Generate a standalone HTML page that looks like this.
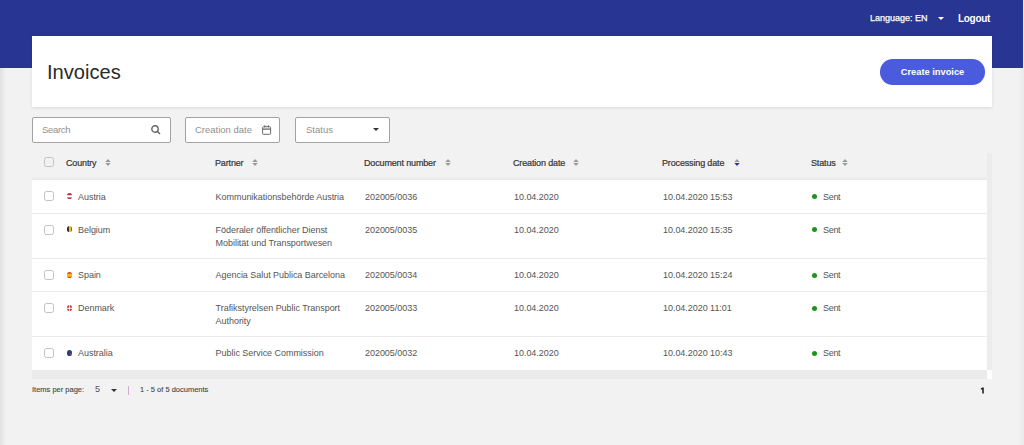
<!DOCTYPE html>
<html><head><meta charset="utf-8">
<style>
*{box-sizing:border-box;margin:0;padding:0}
html,body{width:1024px;height:445px;overflow:hidden}
body{background:#f2f2f2;font-family:"Liberation Sans",sans-serif;position:relative;color:#333}
.hdr{position:absolute;left:0;top:0;width:1023px;height:68px;background:#283593}
.lang{position:absolute;left:870px;top:12px;color:#fff;font-size:9px;line-height:12px;-webkit-text-stroke:0.25px #fff}
.langarr{position:absolute;left:938.3px;top:17px;width:0;height:0;border-left:3.5px solid transparent;border-right:3.5px solid transparent;border-top:3.5px solid #fff}
.logout{position:absolute;left:958px;top:11.7px;color:#fff;font-size:10px;font-weight:bold;line-height:13px;letter-spacing:-0.3px}
.leftshade{position:absolute;left:0;top:68px;width:6px;height:377px;background:linear-gradient(to right,#e0e0e3,#f2f2f2)}
.rightshade{position:absolute;left:1018px;top:68px;width:6px;height:377px;background:linear-gradient(to right,#f2f2f2,#eaeaea)}
.card{position:absolute;left:32px;top:36px;width:960px;height:70.5px;background:#fff;box-shadow:0 1px 3px rgba(0,0,0,.10)}
.title{position:absolute;left:47px;top:60px;font-size:20.1px;color:#2a2a2a;line-height:24px}
.btn{position:absolute;left:880px;top:59.4px;width:105px;height:25.4px;border-radius:12.7px;background:#4a5bdd;color:#fff;font-size:9.3px;font-weight:bold;line-height:26.6px;text-align:center}
.inp{position:absolute;top:117px;height:25.6px;background:#fff;border:1px solid #a2a2a2;border-radius:2px}
.ph{position:absolute;top:0;line-height:23.6px;font-size:9.5px;color:#909090}
.th{position:absolute;top:177px;left:32px;width:955px;height:3px;background:linear-gradient(#efefef,#e9e9e9)}
.scroll{position:absolute;left:987px;top:153px;width:5px;height:226px;background:#ececec}
.hcell{position:absolute;top:157px;font-size:9px;color:#383838;line-height:12px;-webkit-text-stroke:0.22px #383838;letter-spacing:-0.15px}
.cb{position:absolute;width:10px;height:10px;border:1px solid #c2c2c2;border-radius:2.5px;background:#fff}
.rowbg{position:absolute;left:32px;width:955px;background:#fff}
.sep{position:absolute;left:32px;width:955px;height:1px;background:#ebebeb}
.hscroll{position:absolute;left:32px;top:370.3px;width:955px;height:9px;background:#ebebeb}
.corner{position:absolute;left:987px;top:370.3px;width:5px;height:9px;background:#fff}
.flagw{position:absolute;width:5.8px;height:6.6px;border-radius:50%;overflow:hidden}
.flagw svg{display:block;width:5.8px;height:6.6px}
.cell{position:absolute;font-size:9px;color:#555;line-height:11.6px;letter-spacing:-0.04px;transform:scaleY(1.09);transform-origin:0 0}
.dot{position:absolute;width:5px;height:5px;border-radius:50%;background:#1b951b}
.foot{position:absolute;top:385.3px;font-size:7.5px;color:#444;line-height:10px;-webkit-text-stroke:0.1px #444}
.sorti{position:absolute;top:158px;display:block}
</style></head><body>
<div class="hdr"></div><div class="lang">Language: EN</div><div class="langarr"></div><div class="logout">Logout</div>
<div class="leftshade"></div><div class="rightshade"></div>
<div class="card"></div><div class="title">Invoices</div><div class="btn">Create invoice</div>
<div class="inp" style="left:32px;width:138.5px"><span class="ph" style="left:9px;letter-spacing:-0.3px">Search</span><svg style="position:absolute;left:118.3px;top:6.6px" width="10" height="10" viewBox="0 0 10 10"><circle cx="4" cy="4" r="3.2" fill="none" stroke="#666" stroke-width="1.4"/><path d="M6.3 6.3L9 9" stroke="#666" stroke-width="1.5"/></svg></div>
<div class="inp" style="left:185px;width:95.3px"><span class="ph" style="left:9px">Creation date</span><svg style="position:absolute;left:76px;top:7.2px" width="10" height="10" viewBox="0 0 10 10"><rect x="0.6" y="1.7" width="8" height="7.6" rx="1" fill="none" stroke="#6a6a6a" stroke-width="1"/><path d="M0.6 4.1H8.6" stroke="#6a6a6a" stroke-width="1.3"/><path d="M2.8 0.3V2.6M6.4 0.3V2.6" stroke="#6a6a6a" stroke-width="1.1"/></svg></div>
<div class="inp" style="left:295px;width:95px"><span class="ph" style="left:10px">Status</span><div style="position:absolute;left:77px;top:10px;border-left:3.5px solid transparent;border-right:3.5px solid transparent;border-top:3.5px solid #333"></div></div>
<div class="th"></div><div class="scroll"></div>
<div class="cb" style="left:44px;top:157px;background:transparent"></div>
<div class="hcell" style="left:66px">Country</div>
<div class="hcell" style="left:215px">Partner</div>
<div class="hcell" style="left:364px">Document number</div>
<div class="hcell" style="left:513px">Creation date</div>
<div class="hcell" style="left:662px">Processing date</div>
<div class="hcell" style="left:811px">Status</div>
<svg class="sorti" style="left:104.5px" width="6" height="9" viewBox="0 0 6 9"><path d="M0.3 3.9L3 1L5.7 3.9Z" fill="#999"/><path d="M0.3 5.1L3 8L5.7 5.1Z" fill="#999"/></svg>
<svg class="sorti" style="left:252.0px" width="6" height="9" viewBox="0 0 6 9"><path d="M0.3 3.9L3 1L5.7 3.9Z" fill="#999"/><path d="M0.3 5.1L3 8L5.7 5.1Z" fill="#999"/></svg>
<svg class="sorti" style="left:444.5px" width="6" height="9" viewBox="0 0 6 9"><path d="M0.3 3.9L3 1L5.7 3.9Z" fill="#999"/><path d="M0.3 5.1L3 8L5.7 5.1Z" fill="#999"/></svg>
<svg class="sorti" style="left:573.0px" width="6" height="9" viewBox="0 0 6 9"><path d="M0.3 3.9L3 1L5.7 3.9Z" fill="#999"/><path d="M0.3 5.1L3 8L5.7 5.1Z" fill="#999"/></svg>
<svg class="sorti" style="left:733.5px" width="6" height="9" viewBox="0 0 6 9"><path d="M0.3 3.9L3 1L5.7 3.9Z" fill="#999"/><path d="M0.3 5.1L3 8L5.7 5.1Z" fill="#2a3593"/></svg>
<svg class="sorti" style="left:842.0px" width="6" height="9" viewBox="0 0 6 9"><path d="M0.3 3.9L3 1L5.7 3.9Z" fill="#999"/><path d="M0.3 5.1L3 8L5.7 5.1Z" fill="#999"/></svg>
<div class="rowbg" style="top:180px;height:33px"></div>
<div class="rowbg" style="top:213px;height:45px"></div>
<div class="rowbg" style="top:258px;height:33px"></div>
<div class="rowbg" style="top:291px;height:46px"></div>
<div class="rowbg" style="top:337px;height:33.3px"></div>
<div class="sep" style="top:213px"></div>
<div class="sep" style="top:257.5px"></div>
<div class="sep" style="top:291px"></div>
<div class="sep" style="top:336px"></div>
<div class="cb" style="left:44px;top:191.3px"></div>
<div class="flagw" style="left:66.6px;top:192.6px"><svg viewBox="0 0 6 6" preserveAspectRatio="none"><rect width="6" height="6" fill="#fff"/><rect width="6" height="2" fill="#c42a3e"/><rect y="4" width="6" height="2" fill="#c42a3e"/></svg></div>
<div class="cell" style="left:78px;top:190.6px">Austria</div>
<div class="cell" style="left:215.6px;top:190.6px">Kommunikationsbehörde Austria</div>
<div class="cell" style="left:365px;top:190.6px">202005/0036</div>
<div class="cell" style="left:514px;top:190.6px">10.04.2020</div>
<div class="cell" style="left:663px;top:190.6px">10.04.2020 15:53</div>
<div class="dot" style="left:812.4px;top:193.9px"></div>
<div class="cell" style="left:823px;top:190.6px;letter-spacing:-0.3px">Sent</div>
<div class="cb" style="left:44px;top:224.5px"></div>
<div class="flagw" style="left:66.6px;top:225.8px"><svg viewBox="0 0 6 6" preserveAspectRatio="none"><rect width="2" height="6" fill="#222"/><rect x="2" width="2" height="6" fill="#f5c518"/><rect x="4" width="2" height="6" fill="#e0312c"/></svg></div>
<div class="cell" style="left:78px;top:223.8px">Belgium</div>
<div class="cell" style="left:215.6px;top:223.8px">Föderaler öffentlicher Dienst<br>Mobilität und Transportwesen</div>
<div class="cell" style="left:365px;top:223.8px">202005/0035</div>
<div class="cell" style="left:514px;top:223.8px">10.04.2020</div>
<div class="cell" style="left:663px;top:223.8px">10.04.2020 15:35</div>
<div class="dot" style="left:812.4px;top:227.1px"></div>
<div class="cell" style="left:823px;top:223.8px;letter-spacing:-0.3px">Sent</div>
<div class="cb" style="left:44px;top:270.3px"></div>
<div class="flagw" style="left:66.6px;top:271.6px"><svg viewBox="0 0 6 6" preserveAspectRatio="none"><rect width="6" height="6" fill="#e03a1e"/><rect y="1.5" width="6" height="3" fill="#f5b800"/></svg></div>
<div class="cell" style="left:78px;top:268.6px">Spain</div>
<div class="cell" style="left:215.6px;top:268.6px">Agencia Salut Publica Barcelona</div>
<div class="cell" style="left:365px;top:268.6px">202005/0034</div>
<div class="cell" style="left:514px;top:268.6px">10.04.2020</div>
<div class="cell" style="left:663px;top:268.6px">10.04.2020 15:24</div>
<div class="dot" style="left:812.4px;top:272.9px"></div>
<div class="cell" style="left:823px;top:268.6px;letter-spacing:-0.3px">Sent</div>
<div class="cb" style="left:44px;top:303.4px"></div>
<div class="flagw" style="left:66.6px;top:304.7px"><svg viewBox="0 0 6 6" preserveAspectRatio="none"><rect width="6" height="6" fill="#c8303f"/><rect x="2" width="1" height="6" fill="#fff"/><rect y="2.5" width="6" height="1" fill="#fff"/></svg></div>
<div class="cell" style="left:78px;top:301.7px">Denmark</div>
<div class="cell" style="left:215.6px;top:301.7px">Trafikstyrelsen Public Transport<br>Authority</div>
<div class="cell" style="left:365px;top:301.7px">202005/0033</div>
<div class="cell" style="left:514px;top:301.7px">10.04.2020</div>
<div class="cell" style="left:663px;top:301.7px">10.04.2020 11:01</div>
<div class="dot" style="left:812.4px;top:306.0px"></div>
<div class="cell" style="left:823px;top:301.7px;letter-spacing:-0.3px">Sent</div>
<div class="cb" style="left:44px;top:348.3px"></div>
<div class="flagw" style="left:66.6px;top:349.6px"><svg viewBox="0 0 6 6" preserveAspectRatio="none"><rect width="6" height="6" fill="#1f3f8a"/><circle cx="4" cy="4" r="1" fill="#c44"/></svg></div>
<div class="cell" style="left:78px;top:346.6px">Australia</div>
<div class="cell" style="left:215.6px;top:346.6px">Public Service Commission</div>
<div class="cell" style="left:365px;top:346.6px">202005/0032</div>
<div class="cell" style="left:514px;top:346.6px">10.04.2020</div>
<div class="cell" style="left:663px;top:346.6px">10.04.2020 10:43</div>
<div class="dot" style="left:812.4px;top:350.9px"></div>
<div class="cell" style="left:823px;top:346.6px;letter-spacing:-0.3px">Sent</div>
<div class="hscroll"></div><div class="corner"></div>
<div class="foot" style="left:32px">Items per page:</div>
<div class="foot" style="left:95px;font-size:9px;color:#555;top:384.3px;-webkit-text-stroke:0">5</div>
<div style="position:absolute;left:111px;top:389px;border-left:3px solid transparent;border-right:3px solid transparent;border-top:3px solid #333"></div>
<div style="position:absolute;left:128px;top:386px;width:1px;height:9px;background:#cfaecb"></div>
<div class="foot" style="left:140px">1 - 5 of 5 documents</div>
<svg style="position:absolute;left:980px;top:386.5px" width="5" height="7" viewBox="0 0 5 7"><path d="M2.2 0.4H3.8V6.6H2.2V2.2L0.8 2.8V1.5Z" fill="#222"/></svg>
</body></html>
